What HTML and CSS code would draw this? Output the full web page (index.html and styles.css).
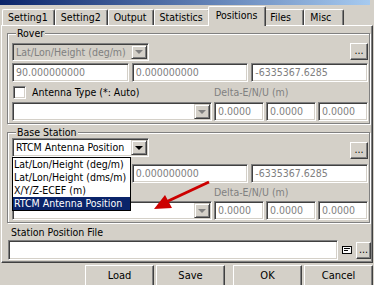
FILE: index.html
```html
<!DOCTYPE html>
<html lang="en">
<head>
    <meta charset="UTF-8">
    <title>Options - Positions</title>
    <link rel="stylesheet" href="styles.css">
</head>
<body>
    <div class="titlebar"></div>

    <!-- tab strip -->
    <div class="tabs">
        <div class="tab">Setting1</div>
        <div class="tab">Setting2</div>
        <div class="tab">Output</div>
        <div class="tab">Statistics</div>
        <div class="tab active">Positions</div>
        <div class="tab">Files</div>
        <div class="tab">Misc</div>
    </div>

    <div class="panel">
        <!-- rover -->
        <fieldset class="group">
            <legend>Rover</legend>
            <div class="row-top">
                <div class="combo disabled wide">
                    <span class="combo-text">Lat/Lon/Height (deg/m)</span>
                    <span class="combo-btn"><i class="arrow"></i></span>
                </div>
                <div class="btn dots">...</div>
            </div>
            <div class="row-pos">
                <div class="edit">90.000000000</div>
                <div class="edit">0.000000000</div>
                <div class="edit">-6335367.6285</div>
            </div>
            <div class="row-ant">
                <span class="check"></span>
                <span class="check-label">Antenna Type (*: Auto)</span>
                <span class="delta-label">Delta-E/N/U (m)</span>
            </div>
            <div class="row-delta">
                <div class="combo">
                    <span class="combo-text"></span>
                    <span class="combo-btn"><i class="arrow"></i></span>
                </div>
                <div class="edit">0.0000</div>
                <div class="edit">0.0000</div>
                <div class="edit">0.0000</div>
            </div>
        </fieldset>

        <!-- base station -->
        <fieldset class="group base">
            <legend>Base Station</legend>
            <div class="row-top">
                <div class="combo wide open">
                    <span class="combo-text">RTCM Antenna Position</span>
                    <span class="combo-btn"><i class="arrow dark"></i></span>
                    <ul class="dropdown">
                        <li>Lat/Lon/Height (deg/m)</li>
                        <li>Lat/Lon/Height (dms/m)</li>
                        <li>X/Y/Z-ECEF (m)</li>
                        <li class="selected">RTCM Antenna Position</li>
                    </ul>
                </div>
                <div class="btn dots">...</div>
            </div>
            <div class="row-pos">
                <div class="edit"></div>
                <div class="edit">0.000000000</div>
                <div class="edit">-6335367.6285</div>
            </div>
            <div class="row-ant">
                <span class="delta-label">Delta-E/N/U (m)</span>
            </div>
            <div class="row-delta">
                <div class="combo">
                    <span class="combo-text"></span>
                    <span class="combo-btn"><i class="arrow"></i></span>
                </div>
                <div class="edit">0.0000</div>
                <div class="edit">0.0000</div>
                <div class="edit">0.0000</div>
            </div>
        </fieldset>

        <div class="file-label">Station Position File</div>
        <div class="row-file">
            <div class="edit file"></div>
            <svg class="file-icon" width="10" height="8" viewBox="0 0 10 8">
                <rect x="0.5" y="0.5" width="9" height="7" fill="#fff" stroke="#000"/>
                <path d="M2 2.5h6M2 4.5h4" stroke="#000"/>
            </svg>
            <div class="btn dots small">...</div>
        </div>
    </div>

    <div class="actions">
        <div class="btn action">Load</div>
        <div class="btn action">Save</div>
        <div class="btn action spaced">OK</div>
        <div class="btn action">Cancel</div>
    </div>

    <!-- red callout arrow -->
    <svg class="callout" width="374" height="285" viewBox="0 0 374 285">
        <line x1="209" y1="182" x2="166" y2="202" stroke="#cc0000" stroke-width="3"/>
        <polygon points="154,209 165,195 172,208" fill="#cc0000"/>
    </svg>
</body>
</html>
```

FILE: styles.css
```css
* {
    box-sizing: border-box;
}
body {
    margin: 0;
    width: 374px;
    height: 285px;
    overflow: hidden;
    position: relative;
    background-color: #d4d0c8;
    font-family: "DejaVu Sans Condensed", "DejaVu Sans", sans-serif;
    font-stretch: condensed;
    font-size: 10.5px;
    color: #000;
}
.titlebar {
    height: 5px;
    width: 370px;
    background: linear-gradient(to right, #0a246a, #a6caf0);
}
.tabs {
    display: flex;
    align-items: flex-end;
    height: 20px;
    padding-left: 2px;
}
.tab {
    height: 16px;
    line-height: 15px;
    min-width: 40px;
    padding: 0 6px 0 5px;
    border: 1px solid;
    border-color: #fff #404040 transparent #fff;
    border-bottom: none;
    border-radius: 2px 2px 0 0;
    box-shadow: inset -1px 0 #808080;
    white-space: nowrap;
}
.tab.active {
    position: relative;
    z-index: 1;
    height: 20px;
    line-height: 17px;
    margin: 0 -2px -1px;
    padding: 0 8px 0 7px;
    background-color: #d4d0c8;
}
.panel {
    width: 372px;
    height: 238px;
    margin-left: 1px;
    padding: 1px 1px 0 5px;
    border: 1px solid;
    border-color: #fff #404040 #404040 #fff;
    box-shadow: inset -1px -1px #808080;
}
.group {
    margin: 0 1px 0 0;
    padding: 3px 1px 2px 4px;
    border: 1px solid #808080;
    box-shadow: inset 1px 1px #fff, 1px 1px #fff;
    min-inline-size: 0;
}
.group legend {
    padding: 0 1px;
    margin-left: 4px;
    line-height: 13px;
    background-color: #d4d0c8;
}
.group.base {
    margin-top: 2px;
}
.row-top {
    display: flex;
    justify-content: space-between;
    align-items: flex-start;
}
.base .row-top {
    margin-top: -4px;
}
.base .row-top .dots {
    margin-top: 4px;
}
.row-pos {
    display: grid;
    grid-template-columns: repeat(3, 1fr);
    gap: 3px;
    margin-top: 2px;
}
.base .row-pos {
    margin-top: 5px;
}
.row-ant {
    display: flex;
    align-items: center;
    height: 20px;
}
.base .row-ant {
    height: 18px;
}
.row-delta {
    display: grid;
    grid-template-columns: 200px repeat(3, 1fr);
    gap: 2px;
}
.edit {
    height: 19px;
    padding: 0 3px;
    line-height: 17px;
    background-color: #fff;
    color: #808080;
    white-space: nowrap;
    overflow: hidden;
    border: 1px solid;
    border-color: #808080 #fff #fff #808080;
    box-shadow: inset 1px 1px #404040, inset -1px -1px #d4d0c8;
}
.combo {
    position: relative;
    display: flex;
    height: 19px;
    padding: 1px;
    background-color: #fff;
    border: 1px solid;
    border-color: #808080 #fff #fff #808080;
    box-shadow: inset 1px 1px #404040, inset -1px -1px #d4d0c8;
}
.combo.wide {
    width: 137px;
}
.combo.disabled {
    height: 18px;
    background-color: #d4d0c8;
    color: #808080;
}
.combo-text {
    flex: 1;
    padding-left: 2px;
    line-height: 15px;
    white-space: nowrap;
    overflow: hidden;
}
.combo-btn {
    display: flex;
    align-items: center;
    justify-content: center;
    width: 16px;
    background-color: #d4d0c8;
    border: 1px solid;
    border-color: #d4d0c8 #404040 #404040 #d4d0c8;
    box-shadow: inset 1px 1px #fff, inset -1px -1px #808080;
}
.arrow {
    width: 0;
    height: 0;
    border-left: 4px solid transparent;
    border-right: 4px solid transparent;
    border-top: 4px solid #808080;
}
.arrow.dark {
    border-top-color: #000;
}
.dropdown {
    position: absolute;
    left: -1px;
    top: 18px;
    z-index: 2;
    width: 119px;
    margin: 0;
    padding: 0;
    list-style: none;
    background-color: #fff;
    border: 1px solid #000;
}
.dropdown li {
    height: 13px;
    line-height: 13px;
    padding-left: 1px;
    white-space: nowrap;
    overflow: hidden;
}
.dropdown li.selected {
    background-color: #0a246a;
    color: #fff;
}
.btn {
    text-align: center;
    background-color: #d4d0c8;
    border: 1px solid;
    border-color: #fff #404040 #404040 #fff;
    box-shadow: inset -1px -1px #808080;
}
.dots {
    width: 18px;
    height: 17px;
    line-height: 13px;
}
.check {
    width: 13px;
    height: 13px;
    margin-left: 1px;
    background-color: #fff;
    border: 1px solid;
    border-color: #808080 #fff #fff #808080;
    box-shadow: inset 1px 1px #404040, inset -1px -1px #d4d0c8;
}
.check-label {
    margin-left: 6px;
}
.delta-label {
    margin-left: auto;
    width: 154px;
    color: #808080;
}
.file-label {
    margin: 2px 0 0 4px;
    line-height: 14px;
}
.row-file {
    display: flex;
    align-items: center;
    margin-top: 1px;
}
.edit.file {
    width: 332px;
    height: 20px;
    margin-left: 1px;
}
.file-icon {
    margin-left: 4px;
}
.dots.small {
    width: 15px;
    margin-left: 4px;
}
.actions {
    display: flex;
    justify-content: flex-end;
    gap: 2px;
    margin-top: 2px;
    padding-right: 1px;
}
.action {
    width: 69px;
    height: 22px;
    line-height: 20px;
    font-size: 11px;
}
.action.spaced {
    margin-left: 6px;
}
.callout {
    position: absolute;
    left: 0;
    top: 0;
    z-index: 3;
    pointer-events: none;
}
```
